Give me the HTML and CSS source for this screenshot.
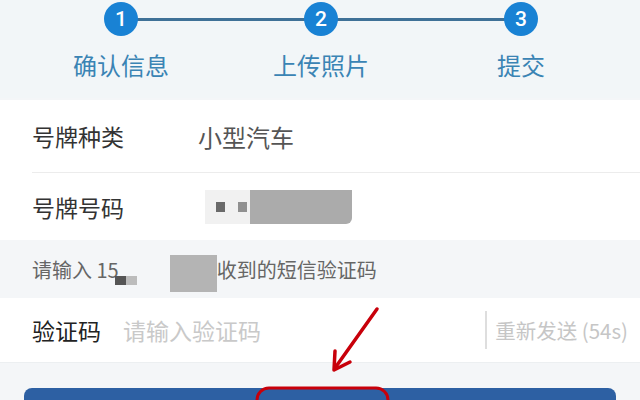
FILE: index.html
```html
<!DOCTYPE html>
<html lang="zh-CN">
<head>
    <meta charset="UTF-8">
    <meta name="viewport" content="width=device-width, initial-scale=1.0">
    <title>短信验证</title>
    <link rel="stylesheet" href="styles.css">
</head>
<body>

    <div class="steps">
        <div class="step">
            <div class="dot">1</div>
            <div class="step-label">确认信息</div>
        </div>
        <div class="step">
            <div class="dot">2</div>
            <div class="step-label">上传照片</div>
        </div>
        <div class="step">
            <div class="dot">3</div>
            <div class="step-label">提交</div>
        </div>
    </div>

    <div class="info">
        <div class="row">
            <span class="row-label">号牌种类</span>
            <span class="row-value">小型汽车</span>
        </div>
        <div class="row">
            <span class="row-label">号牌号码</span>
            <span class="mask-plate">
                <i class="sq dark"></i><i class="sq light"></i><i class="block"></i>
            </span>
        </div>
    </div>

    <div class="tip">
        <span>请输入 15</span>
        <span class="mask-phone">
            <i class="sq dark"></i><i class="sq light"></i><i class="gap"></i><i class="block"></i>
        </span>
        <span>收到的短信验证码</span>
    </div>

    <div class="code-row">
        <span class="code-label">验证码</span>
        <span class="code-input">请输入验证码</span>
        <span class="resend">重新发送 (54s)</span>
    </div>

    <div class="footer">
        <div class="submit-btn"></div>
    </div>

    <svg class="mark" width="640" height="400" viewBox="0 0 640 400">
        <line x1="377" y1="309" x2="335" y2="368" stroke="#c8000a" stroke-width="3.5" stroke-linecap="round"/>
        <polyline points="335,351 334,370 350,362" fill="none" stroke="#c8000a" stroke-width="3.5" stroke-linecap="round" stroke-linejoin="round"/>
        <path d="M257 400 V400 A12 12 0 0 1 269 388 H376 A12 12 0 0 1 388 400" fill="none" stroke="#c8000a" stroke-width="3"/>
    </svg>

</body>
</html>
```

FILE: styles.css
```css
html {
    overflow: hidden;
}

body {
    margin: 0;
    width: 640px;
    height: 400px;
    overflow: hidden;
    background: #f4f6f8;
    font-family: "Noto Sans CJK SC", "Noto Sans", sans-serif;
    position: relative;
}

.steps {
    display: flex;
    height: 98px;
    padding: 2px 0 0 21px;
    box-sizing: border-box;
    background: #f2f6f8;
}

.step {
    width: 200px;
    display: flex;
    flex-direction: column;
    align-items: center;
    position: relative;
}

.step::before,
.step::after {
    content: '';
    position: absolute;
    top: 16px;
    width: 100px;
    height: 3px;
    background: #3f7197;
}

.step::before {
    left: 0;
}

.step::after {
    right: 0;
}

.step:first-child::before,
.step:last-child::after {
    display: none;
}

.dot {
    width: 34px;
    height: 34px;
    border-radius: 50%;
    background: #1982d4;
    color: #fff;
    font-family: Roboto, "Noto Sans", sans-serif;
    font-size: 21px;
    font-weight: 500;
    line-height: 34px;
    text-align: center;
    position: relative;
    z-index: 1;
}

.step-label {
    margin-top: 14px;
    font-size: 24px;
    line-height: 30px;
    color: #3a84b4;
}

.info {
    background: #fff;
    margin-top: 2px;
    padding-left: 32px;
}

.row {
    display: flex;
    align-items: center;
    height: 72px;
    font-size: 23px;
}

.row + .row {
    border-top: 1px solid #ececec;
    height: 67px;
}

.row-label {
    width: 166px;
    color: #333;
}

.row-value {
    font-size: 24px;
    color: #555;
}

.mask-plate {
    display: flex;
    align-items: center;
    height: 34px;
    padding-left: 11px;
    background: linear-gradient(90deg, #f1f1f1 0, #f1f1f1 45px, transparent 45px);
    margin-left: 7px;
}

.sq {
    display: inline-block;
    width: 9px;
    height: 10px;
}

.sq.dark {
    background: #6a6a6a;
}

.sq.light {
    background: #909090;
    margin-left: 13px;
}

.mask-plate .block {
    display: inline-block;
    width: 102px;
    height: 34px;
    margin-left: 3px;
    background: #ababab;
    border-radius: 0 0 6px 0;
}

.tip {
    display: flex;
    align-items: center;
    height: 58px;
    padding-left: 32px;
    font-size: 20px;
    color: #666;
}

.mask-phone {
    display: flex;
    align-items: flex-end;
    height: 37px;
    margin-left: -4px;
    margin-top: 9px;
}

.mask-phone .sq.dark {
    width: 11px;
    height: 9px;
    margin-bottom: 7px;
    background: #555;
}

.mask-phone .sq.light {
    width: 11px;
    height: 9px;
    margin-bottom: 7px;
    margin-left: 0;
    background: #bcbcbc;
}

.mask-phone .gap {
    display: inline-block;
    width: 33px;
}

.mask-phone .block {
    display: inline-block;
    width: 47px;
    height: 37px;
    background: #b4b4b4;
}

.code-row {
    display: flex;
    align-items: center;
    height: 64px;
    padding: 0 12px 0 32px;
    background: #fff;
    border-bottom: 1px solid #eceff1;
}

.code-label {
    width: 91px;
    font-size: 23px;
    color: #222;
}

.code-input {
    flex: 1;
    font-size: 23px;
    color: #c9c9c9;
}

.resend {
    border-left: 2px solid #dedede;
    padding-left: 8px;
    height: 38px;
    line-height: 38px;
    font-size: 20.5px;
    color: #c6c6c6;
    white-space: nowrap;
}

.footer {
    padding: 25px 24px 0;
}

.submit-btn {
    height: 12px;
    border-radius: 8px 8px 0 0;
    background: #2d60a3;
}

.mark {
    position: absolute;
    top: 0;
    left: 0;
    pointer-events: none;
}
```
